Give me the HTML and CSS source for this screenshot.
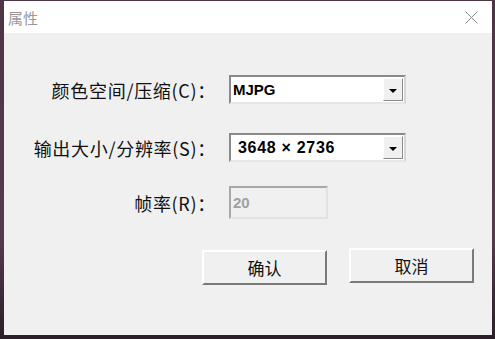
FILE: index.html
```html
<!DOCTYPE html>
<html lang="zh-CN">
<head>
  <meta charset="UTF-8">
  <title>属性</title>
  <link rel="stylesheet" href="styles.css">
</head>
<body>

  <div class="dialog">
    <div class="titlebar">
      <span class="title">属性</span>
      <svg class="close" width="13" height="13" viewBox="0 0 13 13">
        <path d="M0.5 0.5 L12.5 12.5 M12.5 0.5 L0.5 12.5" stroke="#8a8a8a" stroke-width="1" fill="none"/>
      </svg>
    </div>

    <div class="content">
      <!-- 属性行 -->
      <div class="row row-first">
        <label class="label">颜色空间/压缩(C)：</label>
        <div class="combo">
          <span class="value">MJPG</span>
          <span class="drop"><span class="arrow"></span></span>
        </div>
      </div>
      <div class="row">
        <label class="label">输出大小/分辨率(S)：</label>
        <div class="combo">
          <span class="value value-size">3648 × 2736</span>
          <span class="drop"><span class="arrow"></span></span>
        </div>
      </div>
      <div class="row row-rate">
        <label class="label">帧率(R)：</label>
        <div class="edit">20</div>
      </div>

      <div class="buttons">
        <button type="button" class="btn btn-ok">确认</button>
        <button type="button" class="btn">取消</button>
      </div>
    </div>
  </div>

</body>
</html>
```

FILE: styles.css
```css
body {
  margin: 0;
  padding: 1px 0 0 4px;
  height: 339px;
  box-sizing: border-box;
  background: linear-gradient(180deg, #4e3546 0%, #553a4c 70%, #2a1f28 100%);
  font-family: "Noto Sans CJK SC", "Liberation Sans", sans-serif;
  overflow: hidden;
}

.dialog {
  width: 488px;
  height: 334px;
  background-color: #f0f0f0;
}

.titlebar {
  height: 32px;
  background: white;
  display: flex;
  align-items: center;
  justify-content: space-between;
  padding: 0 14px 0 4px;
}

.title {
  font-size: 15px;
  color: #999;
}

.close {
  margin-top: 1px;
}

.content {
  padding-top: 42px;
}

.row {
  display: grid;
  grid-template-columns: 212px 177px;
  column-gap: 13px;
  align-items: center;
  margin-bottom: 29px;
}

.row-rate {
  grid-template-columns: 212px 99px;
  margin-top: -5px;
}

.label {
  text-align: right;
  font-size: 18px;
  color: #111;
  white-space: nowrap;
  letter-spacing: 0.7px;
}

.combo {
  height: 29px;
  box-sizing: border-box;
  background: white;
  border: 2px solid;
  border-color: #8a8a8a #d6d6d6 #e6e6e6 #8a8a8a;
  display: flex;
  align-items: center;
  justify-content: space-between;
  padding-left: 2px;
}

.value {
  font-family: "Liberation Sans", sans-serif;
  font-weight: bold;
  font-size: 15px;
  color: black;
}

.value-size {
  padding-left: 5px;
  font-size: 16px;
  letter-spacing: 0.7px;
}

.drop {
  width: 20px;
  height: 23px;
  box-sizing: border-box;
  margin-right: 1px;
  background: #f0f0f0;
  border: 1px solid;
  border-color: #fff #8a8a8a #8a8a8a #fff;
  display: flex;
  align-items: center;
  justify-content: center;
}

.arrow {
  width: 0;
  height: 0;
  border-left: 4px solid transparent;
  border-right: 4px solid transparent;
  border-top: 4px solid black;
  margin-top: 2px;
}

.edit {
  height: 33px;
  box-sizing: border-box;
  background: #f0f0f0;
  border: 2px solid;
  border-color: #a8a8a8 #e2e2e2 #e2e2e2 #a8a8a8;
  padding-left: 2px;
  display: flex;
  align-items: center;
  font-family: "Liberation Sans", sans-serif;
  font-weight: bold;
  font-size: 15px;
  color: #a0a0a0;
}

.buttons {
  display: flex;
  align-items: flex-start;
  gap: 22px;
  padding-left: 198px;
  margin-top: 8px;
}

.btn {
  width: 125px;
  height: 35px;
  background: #f0f0f0;
  border: 2px solid;
  border-color: #fff #7a7a7a #7a7a7a #fff;
  font-family: "Noto Sans CJK SC", sans-serif;
  font-size: 17px;
  color: #111;
  padding: 0;
}

.btn-ok {
  margin-top: 2px;
}
```
